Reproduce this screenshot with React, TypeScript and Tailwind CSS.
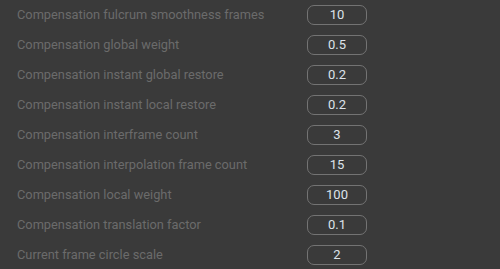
const rows: [string, string][] = [
  ['Compensation fulcrum smoothness frames', '10'],
  ['Compensation global weight', '0.5'],
  ['Compensation instant global restore', '0.2'],
  ['Compensation instant local restore', '0.2'],
  ['Compensation interframe count', '3'],
  ['Compensation interpolation frame count', '15'],
  ['Compensation local weight', '100'],
  ['Compensation translation factor', '0.1'],
  ['Current frame circle scale', '2'],
];

export default function App() {
  return (
    <div className="w-[500px] h-[269px] overflow-hidden bg-[#3a3a3a] font-['Roboto',sans-serif]">
      <div className="flex flex-col">
        {rows.map(([label, value]) => (
          <div key={label} className="flex items-center h-[30px]">
            <span className="w-[307px] pl-[17px] text-[12.8px] text-[#6b6b6b] whitespace-nowrap">
              {label}
            </span>
            <div className="w-[60px] h-[20px] rounded-[7px] border border-[#737373] flex items-center justify-center text-[13px] text-[#dde3ea]">
              {value}
            </div>
          </div>
        ))}
      </div>
    </div>
  );
}
